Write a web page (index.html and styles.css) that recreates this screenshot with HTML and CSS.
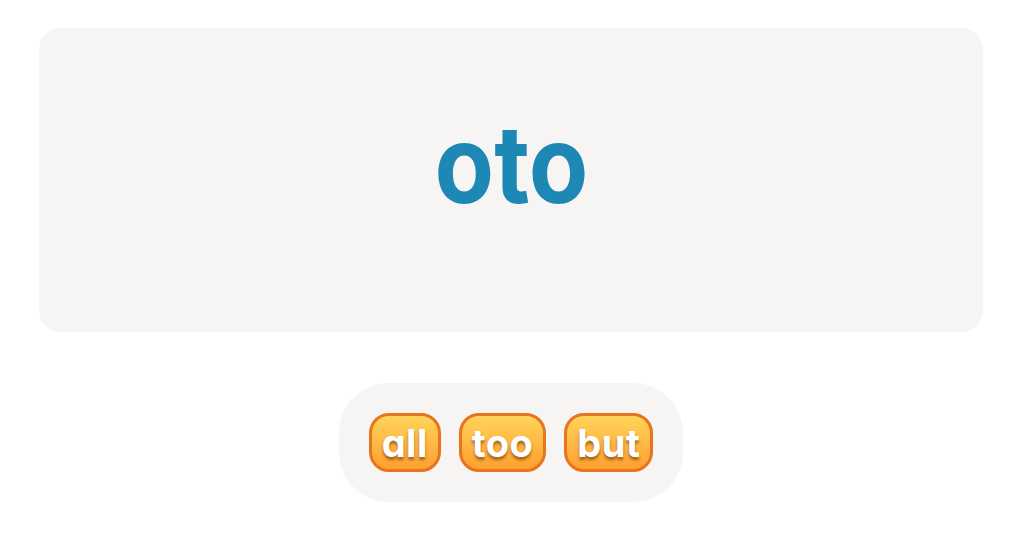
FILE: index.html
```html
<!DOCTYPE html>
<html>
<head>
<meta charset="utf-8">
<link rel="stylesheet" href="styles.css">
</head>
<body>
<main class="page">
  <section class="card">
    <div class="word">oto</div>
  </section>
  <div class="tray">
    <button class="chip">all</button>
    <button class="chip">too</button>
    <button class="chip">but</button>
  </div>
</main>
</body>
</html>
```
FILE: styles.css
```css
html, body {
  margin: 0;
  padding: 0;
  background: #ffffff;
}
.page {
  width: 1022px;
  padding: 28px 39px 0 39px;
  box-sizing: border-box;
  display: flex;
  flex-direction: column;
  align-items: center;
  font-family: Inter, "Liberation Sans", sans-serif;
  font-feature-settings: "cv11" 1;
}
.card {
  width: 944px;
  height: 304px;
  background: #f6f5f4;
  border-radius: 22px;
  display: flex;
  align-items: center;
  justify-content: center;
  padding-bottom: 33px;
  box-sizing: border-box;
}
.word {
  color: #1d88b4;
  font-size: 108px;
  font-weight: 700;
  letter-spacing: 0;
  line-height: 1;
  transform: scaleX(0.9);
}
.tray {
  margin-top: 51px;
  background: #f6f5f4;
  border-radius: 50px;
  padding: 30px;
  display: flex;
  gap: 18px;
}
.chip {
  height: 59px;
  box-sizing: border-box;
  padding: 0 10px;
  border: 3px solid #e8751e;
  border-radius: 20px;
  background: linear-gradient(#ffd45a, #ffa030);
  color: #ffffff;
  font-family: inherit;
  font-feature-settings: "cv11" 1;
  font-size: 38px;
  font-weight: 700;
  letter-spacing: 0.5px;
  line-height: 1;
  text-shadow: 0 3px 3px rgba(90, 40, 0, 0.55);
  cursor: pointer;
}
```
